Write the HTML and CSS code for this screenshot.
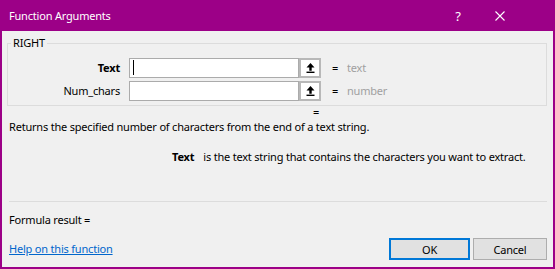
FILE: index.html
```html
<!DOCTYPE html>
<html>
<head>
  <title>Function Arguments</title>
  <link rel="stylesheet" href="styles.css">
</head>
<body>
<div class="window">
  <div class="titlebar">
    <span class="title">Function Arguments</span>
    <span class="tb-help">?</span>
    <span class="tb-close">
      <svg width="10" height="10" viewBox="0 0 10 10"><path d="M0.5 0.5 L9.5 9.5 M9.5 0.5 L0.5 9.5" stroke="#fff" stroke-width="1.1" fill="none"/></svg>
    </span>
  </div>
  <div class="dialog">
    <fieldset class="group">
      <legend>RIGHT</legend>
      <div class="arg-row">
        <label class="arg-label bold">Text</label>
        <div class="arg-input"><span class="caret"></span></div>
        <div class="arg-pick">
          <svg width="9" height="10" viewBox="0 0 9 10"><path d="M4.5 0 L0.5 4.5 L3.3 4.5 L3.3 7.8 L5.7 7.8 L5.7 4.5 L8.5 4.5 Z" fill="#000"/><rect x="0.5" y="8.6" width="8" height="1.4" fill="#000"/></svg>
        </div>
        <span class="arg-eq">=</span>
        <span class="arg-value">text</span>
      </div>
      <div class="arg-row">
        <label class="arg-label">Num_chars</label>
        <div class="arg-input"></div>
        <div class="arg-pick">
          <svg width="9" height="10" viewBox="0 0 9 10"><path d="M4.5 0 L0.5 4.5 L3.3 4.5 L3.3 7.8 L5.7 7.8 L5.7 4.5 L8.5 4.5 Z" fill="#000"/><rect x="0.5" y="8.6" width="8" height="1.4" fill="#000"/></svg>
        </div>
        <span class="arg-eq">=</span>
        <span class="arg-value">number</span>
      </div>
    </fieldset>
    <div class="result-eq">=</div>
    <div class="summary">Returns the specified number of characters from the end of a text string.</div>
    <div class="arg-help"><span class="bold">Text</span><span class="arg-help-text">is the text string that contains the characters you want to extract.</span></div>
    <div class="separator"></div>
    <div class="formula">Formula result =</div>
    <div class="footer">
      <a class="help-link" href="#">Help on this function</a>
      <button class="btn btn-ok">OK</button>
      <button class="btn">Cancel</button>
    </div>
  </div>
</div>
</body>
</html>
```

FILE: styles.css
```css
body {
  margin: 0;
  padding: 0;
  font-family: "Noto Sans", "Open Sans", sans-serif;
  font-size: 11px;
  letter-spacing: -0.2px;
  line-height: 16px;
  color: #000;
}
.window {
  width: 555px;
  height: 269px;
  box-sizing: border-box;
  background: #9c0087;
  padding: 0 2px 2px 2px;
  display: flex;
  flex-direction: column;
}
.titlebar {
  height: 31px;
  flex-shrink: 0;
  display: flex;
  align-items: center;
  color: #fff;
}
.title {
  flex: 1;
  padding-left: 7px;
}
.tb-help {
  width: 20px;
  text-align: center;
  font-size: 13px;
}
.tb-close {
  width: 20px;
  margin-left: 22px;
  margin-right: 43px;
  display: flex;
  justify-content: center;
}
.dialog {
  flex: 1;
  min-height: 0;
  background: #f0f0f0;
  padding: 0 6px 0 5px;
}
.bold {
  font-weight: 700;
}
.group {
  margin: 5px 0 0 0;
  padding: 8px 0 4px 0;
  border: 1px solid #dcdcdc;
  min-width: 0;
}
.group legend {
  padding: 0 2px;
  margin-left: 3px;
  line-height: 14px;
}
.arg-row {
  display: flex;
  align-items: center;
  height: 20px;
}
.arg-row + .arg-row {
  margin-top: 3px;
}
.arg-label {
  width: 112px;
  margin-right: 9px;
  text-align: right;
}
.arg-input {
  width: 170px;
  height: 20px;
  box-sizing: border-box;
  border: 1px solid #ababab;
  background: #fff;
  padding: 1px 0 0 3px;
}
.caret {
  display: block;
  width: 1px;
  height: 15px;
  background: #000;
}
.arg-pick {
  width: 22px;
  height: 20px;
  box-sizing: border-box;
  border: 2px solid #b8b8b8;
  background: #fff;
  display: flex;
  align-items: center;
  justify-content: center;
}
.arg-eq {
  margin-left: 11px;
  width: 15px;
}
.arg-value {
  color: #a0a0a0;
}
.result-eq {
  margin-top: 2px;
  height: 8px;
  line-height: 8px;
  padding-left: 306px;
}
.summary {
  margin-top: 3px;
  padding-left: 2px;
}
.arg-help {
  margin-top: 14px;
  padding-left: 165px;
  display: flex;
}
.arg-help-text {
  margin-left: 9px;
}
.separator {
  margin: 36px 0 0 2px;
  border-top: 1px solid #dcdcdc;
}
.formula {
  margin-top: 10px;
  padding-left: 2px;
}
.footer {
  margin-top: 10px;
  display: flex;
  align-items: center;
  padding-left: 2px;
}
.help-link {
  color: #0066cc;
  text-decoration: underline;
  margin-right: auto;
}
.btn {
  width: 74px;
  height: 22px;
  box-sizing: border-box;
  border: 1px solid #adadad;
  background: #e1e1e1;
  font-family: inherit;
  font-size: 11px;
  letter-spacing: -0.2px;
  color: #000;
  padding: 0;
}
.btn-ok {
  width: 81px;
  margin-right: 3px;
  border: 2px solid #0078d7;
}
```
